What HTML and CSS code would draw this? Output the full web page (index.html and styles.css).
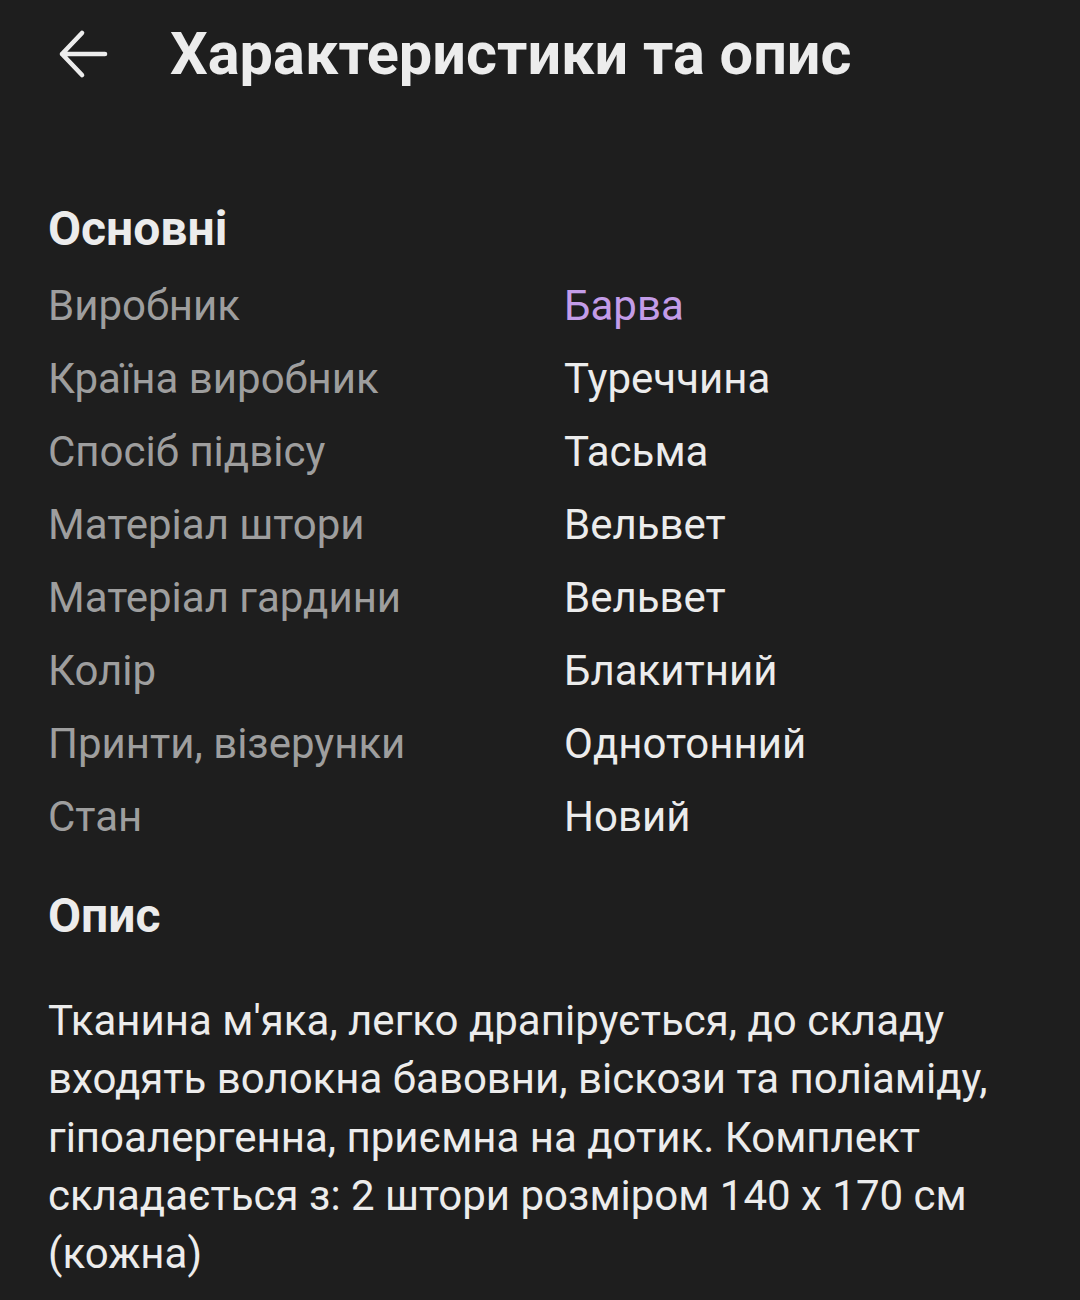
FILE: index.html
```html
<!DOCTYPE html>
<html lang="uk">

<head>
    <meta charset="UTF-8">
    <meta name="viewport" content="width=device-width, initial-scale=1.0">
    <title>Характеристики та опис</title>
    <link rel="stylesheet" href="styles.css">
</head>

<body>
    <header class="topbar">
        <button type="button" class="back">
            <svg width="52" height="52" viewBox="0 0 52 52" fill="none" stroke="currentColor" stroke-width="4.6" stroke-linecap="round" stroke-linejoin="round">
                <path d="M48 26H5M25 5L5 26l20 21" />
            </svg>
        </button>
        <h1 class="title">Характеристики та опис</h1>
    </header>

    <main class="content">
        <h2 class="section">Основні</h2>
        <dl class="specs">
            <dt>Виробник</dt>
            <dd class="link">Барва</dd>
            <dt>Країна виробник</dt>
            <dd>Туреччина</dd>
            <dt>Спосіб підвісу</dt>
            <dd>Тасьма</dd>
            <dt>Матеріал штори</dt>
            <dd>Вельвет</dd>
            <dt>Матеріал гардини</dt>
            <dd>Вельвет</dd>
            <dt>Колір</dt>
            <dd>Блакитний</dd>
            <dt>Принти, візерунки</dt>
            <dd>Однотонний</dd>
            <dt>Стан</dt>
            <dd>Новий</dd>
        </dl>

        <h2 class="section desc-title">Опис</h2>
        <p class="desc">Тканина м'яка, легко драпірується, до складу входять волокна бавовни, віскози та поліаміду, гіпоалергенна, приємна на дотик. Комплект складається з: 2 штори розміром 140 х 170 см (кожна)</p>
    </main>
</body>

</html>
```

FILE: styles.css
```css
* {
    margin: 0;
    padding: 0;
    box-sizing: border-box;
}

body {
    background: #1e1e1e;
    color: #ececec;
    font-family: Roboto, "Noto Sans", sans-serif;
}

.topbar {
    display: flex;
    align-items: center;
    height: 108px;
    padding-left: 57px;
}

.back {
    display: flex;
    background: none;
    border: none;
    color: #ececec;
    width: 113px;
}

.title {
    font-size: 59.5px;
    font-weight: 700;
}

.content {
    padding: 86px 48px 0 48px;
}

.section {
    font-size: 48px;
    font-weight: 700;
    line-height: 70px;
    margin-bottom: 5px;
}

.specs {
    display: grid;
    grid-template-columns: 516px 1fr;
    font-size: 42px;
    line-height: 73px;
}

.specs dt {
    color: #9e9e9e;
}

.specs dd {
    color: #ececec;
}

.specs .link {
    color: #c39ce8;
}

.desc-title {
    margin-top: 28px;
    margin-bottom: 0;
}

.desc {
    margin-top: 41px;
    font-size: 42px;
    line-height: 58.3px;
    color: #ececec;
}
```
